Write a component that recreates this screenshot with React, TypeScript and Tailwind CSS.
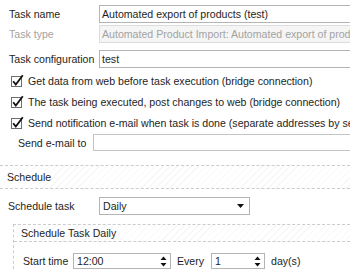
import React from "react";

function Check() {
  return (
    <svg width="14" height="14" viewBox="0 0 14 14" className="flex-none">
      <rect x="0.5" y="2.5" width="10" height="10" fill="#fff" stroke="#6d6d6d" />
      <path d="M2.2 7.2 L4.8 10.6 L11.8 1.2" fill="none" stroke="#111" strokeWidth="1.8" />
    </svg>
  );
}

function Spinner() {
  return (
    <svg width="7" height="11" viewBox="0 0 7 11" className="flex-none">
      <path d="M0.5 4 L3.5 0.5 L6.5 4 Z" fill="#111" />
      <path d="M0.5 7 L6.5 7 L3.5 10.5 Z" fill="#111" />
    </svg>
  );
}

const checks = [
  "Get data from web before task execution (bridge connection)",
  "The task being executed, post changes to web (bridge connection)",
  "Send notification e-mail when task is done (separate addresses by semicolon)",
];

export default function App() {
  return (
    <div className="w-[350px] h-[280px] overflow-hidden bg-white font-['Liberation_Sans',Arial,sans-serif] text-[10.6px] text-[#1e1e1e] leading-[14px]">
      {/* task fields */}
      <div className="flex items-center h-[18px] mt-[5px] pl-[9px]">
        <span className="w-[90px] flex-none">Task name</span>
        <div className="w-[270px] flex-none h-[18px] border border-[#b4b4b4] px-[2px] leading-[16px] whitespace-nowrap">
          Automated export of products (test)
        </div>
      </div>
      <div className="flex items-center h-[18px] mt-[2px] pl-[9px]">
        <span className="w-[90px] flex-none text-[#a3a3a3]">Task type</span>
        <div className="w-[270px] flex-none h-[18px] border border-[#dcdcdc] bg-[#f5f5f5] px-[2px] leading-[16px] text-[#a3a3a3] whitespace-nowrap">
          Automated Product Import: Automated export of products
        </div>
      </div>
      <div className="flex items-center h-[18px] mt-[7px] pl-[9px]">
        <span className="w-[90px] flex-none whitespace-nowrap">Task configuration</span>
        <div className="w-[270px] flex-none h-[18px] border border-[#b4b4b4] px-[2px] leading-[16px]">test</div>
      </div>

      {/* options */}
      <div className="mt-[2px]">
        {checks.map((c) => (
          <div key={c} className="flex items-center gap-[3px] h-[21px] pl-[11px] whitespace-nowrap">
            <Check />
            <span>{c}</span>
          </div>
        ))}
      </div>
      <div className="flex items-center h-[17px] mt-[1px] pl-[18px]">
        <span className="w-[75px] flex-none">Send e-mail to</span>
        <div className="w-[270px] flex-none h-[17px] border border-[#c4c4c4]" />
      </div>

      {/* schedule */}
      <div className="mt-[14px] h-[24px] flex items-center pl-[7px] border-y border-dashed border-[#cccccc] bg-[repeating-linear-gradient(135deg,#f7f7f7_0px,#f7f7f7_1px,#ffffff_1px,#ffffff_5px)]">
        Schedule
      </div>
      <div className="flex items-center h-[18px] mt-[8px] pl-[8px]">
        <span className="w-[91px] flex-none">Schedule task</span>
        <div className="w-[151px] flex-none h-[18px] border border-[#b4b4b4] pl-[3px] pr-[5px] flex items-center justify-between">
          <span>Daily</span>
          <svg width="7" height="4" viewBox="0 0 7 4">
            <path d="M0 0 L7 0 L3.5 4 Z" fill="#111" />
          </svg>
        </div>
      </div>

      <div className="mt-[9px] ml-[13px] border-l border-t border-dashed border-[#cccccc]">
        <div className="h-[17px] flex items-center pl-[7px] border-b border-dashed border-[#cccccc] bg-[repeating-linear-gradient(135deg,#f7f7f7_0px,#f7f7f7_1px,#ffffff_1px,#ffffff_5px)]">
          Schedule Task Daily
        </div>
        <div className="flex items-center h-[16px] mt-[11px] pl-[9px] whitespace-nowrap">
          <span className="w-[50px] flex-none">Start time</span>
          <div className="w-[98px] flex-none h-[16px] border border-[#b4b4b4] pl-[3px] pr-[3px] flex items-center justify-between">
            <span>12:00</span>
            <Spinner />
          </div>
          <span className="ml-[6px] w-[34px] flex-none">Every</span>
          <div className="w-[54px] flex-none h-[16px] border border-[#b4b4b4] pl-[3px] pr-[3px] flex items-center justify-between">
            <span>1</span>
            <Spinner />
          </div>
          <span className="ml-[6px]">day(s)</span>
        </div>
      </div>
    </div>
  );
}
